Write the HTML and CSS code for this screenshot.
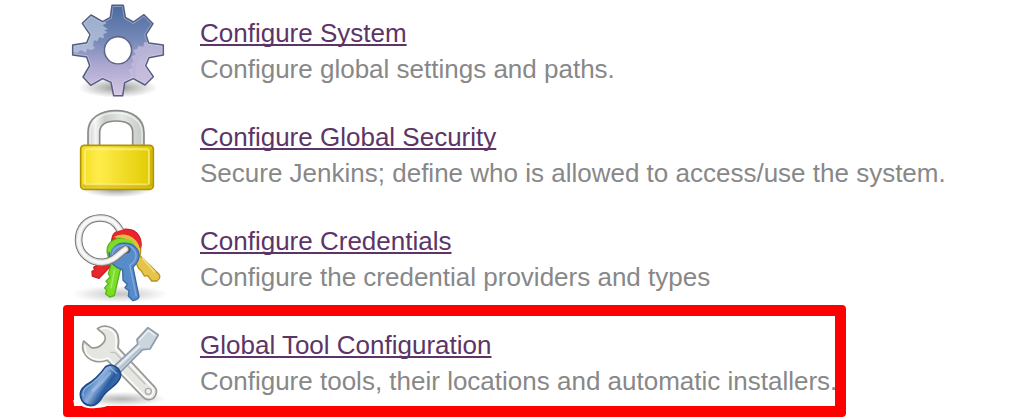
FILE: index.html
```html
<!DOCTYPE html>
<html lang="en">
<head>
<meta charset="utf-8">
<title>Manage Jenkins</title>
<link rel="stylesheet" href="styles.css">
</head>
<body>
<main class="links">
  <section class="item">
    <svg class="icon" viewBox="0 0 360 312" aria-hidden="true">
      <defs>
        <linearGradient id="gear" x1="0" y1="0" x2="0" y2="1"><stop offset="0" stop-color="#4b6a9d"/><stop offset=".38" stop-color="#7589b7"/><stop offset=".65" stop-color="#aaa6cf"/><stop offset="1" stop-color="#d7c8e4"/></linearGradient>
        <radialGradient id="shade"><stop offset="0" stop-color="#000" stop-opacity=".42"/><stop offset=".55" stop-color="#000" stop-opacity=".18"/><stop offset="1" stop-color="#000" stop-opacity="0"/></radialGradient>
        <clipPath id="gearClip"><path d="M156 16H190L196 52 220 66 252 44 279 71 258 104 266 129 310 135V165L267 173 257 197 280 230 255 255 220 236 194 248 188 287H161L153 247 128 236 92 256 69 231 89 197 80 171 38 165V135L80 128 90 104 67 70 93 45 128 65 151 52Z"/></clipPath>
      </defs>
      <ellipse cx="174" cy="263" rx="120" ry="30" fill="url(#shade)"/>
      <path fill="url(#gear)" fill-rule="evenodd" d="M156 16H190L196 52 220 66 252 44 279 71 258 104 266 129 310 135V165L267 173 257 197 280 230 255 255 220 236 194 248 188 287H161L153 247 128 236 92 256 69 231 89 197 80 171 38 165V135L80 128 90 104 67 70 93 45 128 65 151 52ZM174 108a43 43 0 1 0 .1 0Z"/>
      <g clip-path="url(#gearClip)">
        <path d="M55 35L115 52 140 70 128 76 144 88 132 91 143 97 130 103 132 115 118 112 112 124 102 121 99 137 105 144 94 151 82 146 77 158 62 150 52 160 34 151V120L80 125Z" fill="#c2cee3" opacity=".65"/>
        <path d="M313 124L252 127 250 140 235 137 231 148 219 150 228 164 214 169 221 183 213 193 219 203 204 210 213 220 211 233 243 252 270 255 285 228 260 200 272 175 313 168Z" fill="#cac0df" opacity=".7"/>
        <path d="M224 246Q213 184 248 155Q277 137 315 139" fill="none" stroke="#b5b3d5" stroke-width="8" opacity=".7"/>
      </g>
      <path fill="none" stroke="#e0e3f0" stroke-opacity=".4" stroke-width="10" clip-path="url(#gearClip)" d="M156 16H190L196 52 220 66 252 44 279 71 258 104 266 129 310 135V165L267 173 257 197 280 230 255 255 220 236 194 248 188 287H161L153 247 128 236 92 256 69 231 89 197 80 171 38 165V135L80 128 90 104 67 70 93 45 128 65 151 52Z"/>
      <path fill="none" stroke="#545e81" stroke-width="4.5" stroke-linejoin="round" d="M156 16H190L196 52 220 66 252 44 279 71 258 104 266 129 310 135V165L267 173 257 197 280 230 255 255 220 236 194 248 188 287H161L153 247 128 236 92 256 69 231 89 197 80 171 38 165V135L80 128 90 104 67 70 93 45 128 65 151 52Z"/>
      <circle cx="174" cy="151" r="41" fill="#fff" stroke="#5e6588" stroke-width="5"/>
    </svg>
    <div class="copy"><a class="title" href="#">Configure System</a><p class="detail">Configure global settings and paths.</p></div>
  </section>
  <section class="item">
    <svg class="icon" viewBox="0 0 360 312" aria-hidden="true">
      <defs>
        <linearGradient id="gold"><stop offset="0" stop-color="#f3dd20"/><stop offset=".25" stop-color="#ffec4b"/><stop offset="1" stop-color="#e0ca00"/></linearGradient>
        <linearGradient id="steel"><stop offset="0" stop-color="#c7c9c7"/><stop offset=".13" stop-color="#f5f6f4"/><stop offset=".3" stop-color="#c8cdca"/><stop offset=".6" stop-color="#e4e8e4"/><stop offset="1" stop-color="#c4c8c4"/></linearGradient>
      </defs>
      <ellipse cx="171" cy="256" rx="105" ry="24" fill="url(#shade)"/>
      <path d="M84 128V84C84 42 121 20 168 20S252 43 252 86V128H218V85C218 61 199 51 169 51S119 62 119 86V128Z" fill="url(#steel)" stroke="#888b88" stroke-width="5"/>
      <path d="M90 122V85C91 47 126 27 168 27S245 48 246 86V120" fill="none" stroke="#fff" stroke-opacity=".6" stroke-width="4"/>
      <rect x="62" y="124" width="218" height="132" rx="11" fill="url(#gold)" stroke="#b09308" stroke-width="5"/>
      <path d="M75 243V144Q75 136 83 136H259Q267 136 267 144V243" fill="none" stroke="#fff390" stroke-opacity=".65" stroke-width="6"/>
      <path d="M67 246H275" stroke="#c3a713" stroke-width="11" opacity=".5"/><path d="M75 241H263" stroke="#fff182" stroke-width="5" opacity=".7"/><path d="M273 137V246" stroke="#bda111" stroke-width="7" opacity=".5"/>
    </svg>
    <div class="copy"><a class="title" href="#">Configure Global Security</a><p class="detail">Secure Jenkins; define who is allowed to access/use the system.</p></div>
  </section>
  <section class="item">
    <svg class="icon" viewBox="0 0 360 312" aria-hidden="true">
      <ellipse cx="180" cy="258" rx="145" ry="26" fill="url(#shade)" opacity=".55"/>
      <g stroke-width="4" stroke-linejoin="round">
        <path d="M156 92C158 72 180 62 204 64C233 66 248 93 242 119L222 147 166 160 117 211 97 204 96 190 104 186 101 178 145 151Z" fill="#e8262b" stroke="#c71e22"/>
        <path d="M164 85C188 70 225 81 238 104Q245 119 240 143L297 199Q304 209 291 219L275 219 263 203 253 204 244 189 235 180 226 158Z" fill="#e6c449" stroke="#b79322"/>
        <path d="M246 149L285 193" stroke="#f5dd7b" stroke-width="5"/>
        <path d="M143 140Q136 111 159 98Q187 80 226 105L191 171 180 189 163 263 149 267 137 258 140 246 134 240 145 227 138 220 151 207 145 198 153 171Z" fill="#7bdd28" stroke="#58b319"/>
        <path d="M164 184L153 241" stroke="#a0eb61" stroke-width="5"/>
        <path d="M148 144C144 119 167 104 193 105C221 104 239 126 237 147C235 160 225 172 219 178L237 266Q235 275 219 278L205 264 207 248 195 239 202 229 189 217 188 186C164 178 150 164 148 144Z" fill="#588bc9" stroke="#386aa6"/>
        <path d="M156 143C158 124 173 112 193 112C214 112 229 126 228 145C227 157 217 167 209 171L229 265" fill="none" stroke="#83aade" stroke-width="4"/>
        <ellipse cx="198" cy="125" rx="12" ry="10" fill="#40634b" stroke="#355876"/>
      </g>
      <g fill="none" stroke-linecap="round">
        <path d="M180 66C165 39 141 29 119 30C78 31 54 62 56 100C58 139 92 163 127 163C161 162 177 136 196 124" stroke="#777" stroke-width="23"/>
        <path d="M180 66C165 39 141 29 119 30C78 31 54 62 56 100C58 139 92 163 127 163C161 162 177 136 196 124" stroke="#ddd" stroke-width="17"/>
        <path d="M180 66C165 39 141 29 119 30C78 31 54 62 56 100C58 139 92 163 127 163C161 162 177 136 196 124" stroke="#f7f7f7" stroke-width="10"/>
      </g>
      <path d="M157 89C164 67 187 63 204 65Q230 68 240 93Q244 107 242 123L226 107Q197 84 157 89Z" fill="#e8262b"/><path d="M160 88Q181 74 208 83Q235 95 240 124L225 113Q203 86 160 88Z" fill="#e6bc42"/><path d="M145 127Q144 109 159 99Q177 87 203 94Q218 98 226 111Q187 92 161 116Q153 123 151 136Z" fill="#7bdd28"/>
    </svg>
    <div class="copy"><a class="title" href="#">Configure Credentials</a><p class="detail">Configure the credential providers and types</p></div>
  </section>
  <section class="item">
    <svg class="icon front" viewBox="0 36 360 312" aria-hidden="true">
      <defs><linearGradient id="blue" x1="0" y1="0" x2="1" y2=".65"><stop offset="0" stop-color="#6e99d2"/><stop offset=".3" stop-color="#376eb5"/><stop offset=".52" stop-color="#8caedb"/><stop offset=".7" stop-color="#285b9f"/><stop offset="1" stop-color="#5a86bf"/></linearGradient></defs>
      <path d="M40 300H90L151 312Q139 323 101 325Q78 325 64 317L42 314Z" fill="#fff"/>
      <ellipse cx="185" cy="297" rx="135" ry="22" fill="url(#shade)" opacity=".7"/>
      <path d="M112 86C131 71 164 80 173 103Q178 121 174 143L285 262C296 276 285 299 267 299Q255 300 247 289L142 181C118 190 88 185 74 161Q63 143 71 123L94 143Q113 147 128 131Q142 116 131 102Z" fill="#e5e6e2" stroke="#999b92" stroke-width="5" stroke-linejoin="round"/>
      <path d="M120 87Q149 77 165 103Q171 122 167 146L278 265Q285 280 269 291Q259 294 250 283L144 174Q101 190 78 159L74 137" fill="none" stroke="#fafafa" stroke-width="5"/>
      <path d="M151 157L165 157 256 253" fill="none" stroke="#bfc1bc" stroke-width="4"/>
      <circle cx="265" cy="274" r="9" fill="#eee" stroke="#aaa" stroke-width="4"/>
      <path d="M162 199L233 132 231 118 264 83 295 105 270 147 248 149 180 217Z" fill="#cbd5dd" stroke="#8d9baa" stroke-width="5" stroke-linejoin="round"/>
      <path d="M169 202L240 137M238 121L265 91 286 106" fill="none" stroke="#edf3f7" stroke-width="4"/><path d="M174 210L243 144" stroke="#afbac7" stroke-width="4"/>
      <path d="M137 200Q153 190 171 203Q185 216 181 231C173 257 145 264 128 289Q112 318 92 317Q68 315 62 291Q57 271 77 256C104 241 120 224 137 200Z" fill="url(#blue)" stroke="#204a87" stroke-width="5"/>
      <path d="M149 202L171 221M139 204Q117 237 81 261Q65 273 70 289" fill="none" stroke="#a3c1e5" stroke-width="4" opacity=".75"/><path d="M149 220Q127 248 99 272" fill="none" stroke="#a8c5e9" stroke-width="9" stroke-linecap="round" opacity=".55"/>
    </svg>
    <div class="copy"><a class="title" href="#">Global Tool Configuration</a><p class="detail">Configure tools, their locations and automatic installers.</p></div>
    <div class="highlight"></div>
  </section>
</main>
</body>
</html>
```
FILE: styles.css
```css
* { box-sizing: border-box; }
body { margin: 0; background: #fff; overflow: hidden; }
.links { height: 420px; padding-left: 60px; font: 26px/36px "Liberation Sans", Arial, sans-serif; }
.item { display: flex; gap: 20px; height: 104px; position: relative; }
.icon { flex: none; width: 120px; height: 104px; overflow: visible; }
.front { position: relative; z-index: 2; }
.copy { padding-top: 15px; white-space: nowrap; }
.title { display: block; width: max-content; color: #5c3566; text-decoration: underline 2px; text-underline-offset: 2px; text-decoration-skip-ink: none; }
.detail { margin: 0; color: #888; }
.highlight { position: absolute; z-index: 1; left: 3px; top: -7px; width: 783px; height: 112px; border: 11px solid #f00; border-radius: 4px; }
```
